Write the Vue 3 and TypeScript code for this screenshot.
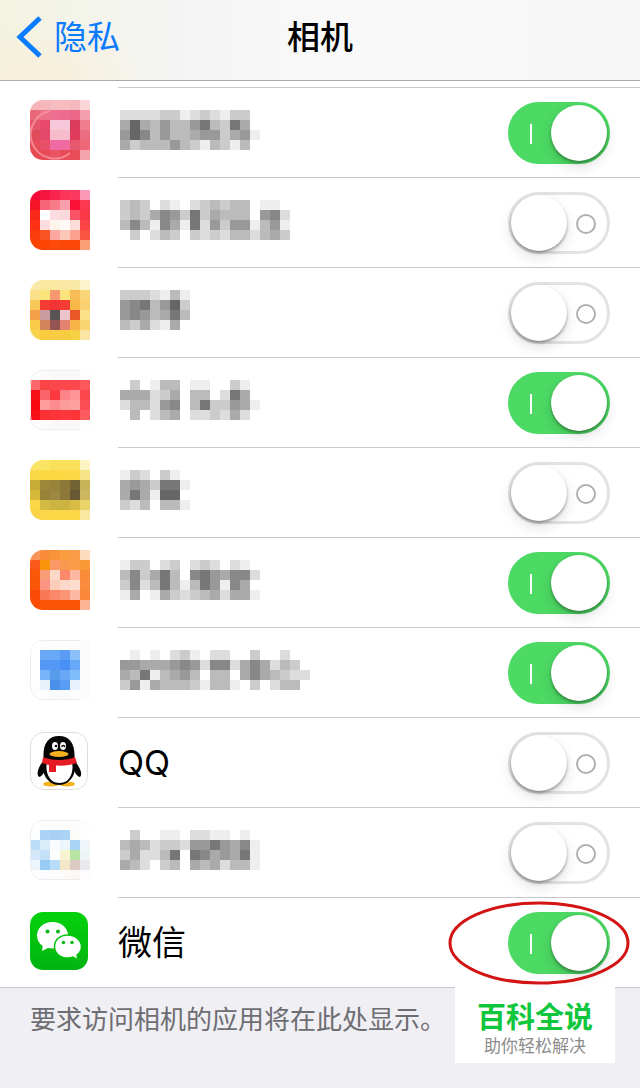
<script setup lang="ts">
import { ref } from 'vue'

type Icon = 'qq' | 'wechat' | string[]

interface AppRow {
  id: string
  icon: Icon
  name?: string
  mask?: string[]
  enabled: boolean
  ring?: boolean
  outlined?: boolean
  circled?: boolean
}

const rows = ref<AppRow[]>([
  {
    id: 'a1',
    enabled: true,
    ring: true,
    icon: [
      'f5b5b8 f5b8ba f6bcc0 f6bcc0 f5b9bc fad6d8',
      'e86878 ec7088 ee6f92 ee6b90 ec6888 f59fac',
      'e6566a e8486a f8c8da f8c8da dc3c5c f07c8c',
      'e04c5c e4486a f6bccc f6bccc e23c5c ec6c80',
      'e64c5a e8506a f06aa4 f06aa0 e6586c ee6878',
      'e84a52 e84a58 ea5464 e84a58 e84c58 f6a4ac',
    ],
    mask: ['ddddccedcdeccf', 'a6ab9bb97bc7af', '968b9bba99ca9e', 'acbbb9bcebcebf'],
  },
  {
    id: 'a2',
    enabled: false,
    icon: [
      'f40a38 f61440 fa2450 fb3458 fb3860 fc98b8',
      'f41428 f86478 f87c88 faa0ac fc1038 fb3850',
      'fa2818 ffffff fbdce0 fbd8dc fb5468 fb3848',
      'fb3014 fcdcdc fff4ec fffaf6 fddcd8 fb4448',
      'fb3c0c fb5424 fca8a0 fcc8b8 fca090 fb5440',
      'fb4404 fb4404 fb4a0c fb4808 fb4808 fca078',
    ],
    mask: ['cbcfdefdcbcbbfee', 'cbca89c7cabbbf98d', 'b8be8ae7d9c99eb9e', 'fcfdbcfcdcdbbdbac'],
  },
  {
    id: 'a3',
    enabled: false,
    icon: [
      'faeaa8 fae8a0 fae8a0 fae8a4 fae8a8 fcf2cc',
      'fae088 fce47c f89870 fce47c f8bc54 fad478',
      'f8c858 f43c34 f23434 f43c34 f8b848 fad070',
      'f4a048 c89ca0 585454 ecc4cc e85828 fae088',
      'f8cc48 d4845c 945454 e48470 f8b448 fad470',
      'f8d44c f8cc3c f8cc44 f8cc40 f8d044 fae4a4',
    ],
    mask: ['cccdebe', '987b96c', '989ba7b', 'bcadeaf'],
  },
  {
    id: 'a4',
    enabled: true,
    outlined: true,
    icon: [
      'fdfcfc fcfafb fbf8fa fbf8fa fbf8fa fefcfd',
      'fb686c fb4448 fc484c fc484c fc484c fc585c',
      'f81018 fb6468 fc3840 fc8488 fc9498 fc484c',
      'fa0810 fc9c9c fc8c90 fc9c9c fca0a0 fc4c54',
      'f81018 fb3034 fc3438 fc383c fc3438 fc5c60',
      'fdfcfc fcfafb fbf8fa fbf8fa fbf8fa fefdfe',
    ],
    mask: ['fcfebbfeeffcef', 'aaadcafbbfd7af', 'dbbd98fb7cc9ae', 'fbfdbafddcdadf'],
  },
  {
    id: 'a5',
    enabled: false,
    icon: [
      'fae468 fae464 fae058 fae058 fae058 fcf4c4',
      'fad848 fcd844 fcd844 fcd844 fcd848 f8e488',
      'c8ac38 9c8838 988438 8c7838 746434 c8b458',
      'd8b838 988438 9c8840 8c7838 685834 ccb860',
      'fcd848 d4bc44 ccb440 ccb440 d8bc44 e8d468',
      'fad444 fcd848 fcd848 fcd848 fcd848 fae8a0',
    ],
    mask: ['ecdfcef', 'a9ac77e', 'a7ae66f', 'cdbfbbe'],
  },
  {
    id: 'a6',
    enabled: true,
    icon: [
      'f89458 f88c38 fa9438 fa9c40 fa9c48 fcdcbc',
      'fa5818 fa9408 fb9868 fa9850 fa9c48 fa9838',
      'fa5808 fb9c78 fcd8c8 fb8868 fcb8a0 fa8c38',
      'fa5808 fb9480 fcccb8 fcd8cc fcdccc fa8c40',
      'fa4c08 fa7854 fb8868 fb9474 fcb8a0 fa8838',
      'fa4c04 fb5404 fb5404 fb5404 fb5404 fcb494',
    ],
    mask: ['eccfdcfdcdfdef', 'b8ca7bf879a88d', 'c8db7beb79e8af', 'eafeacdcbadaae'],
  },
  {
    id: 'a7',
    enabled: true,
    outlined: true,
    icon: [
      'ffffff fdfdfd fdfdfd fdfdfd fdfdfd fcfcfc',
      'ffffff 68a8f4 68a8f8 589cf6 8cc0f8 fcfcfc',
      'ffffff 5498f4 5498f6 4890f6 68a8f8 fcfcfc',
      'ffffff 78b4fa 589cec 68a8f4 80bcfa fcfcfc',
      'fdfdfd e8f0fa 4890ec 589cf6 e8f0fc fcfcfc',
      'fdfdfd fdfdfd f8fafc f8fafc fdfdfd fcfcfc',
    ],
    mask: ['fefefdcefddffcffdff', '99aaa989d88da8adbcf', 'ab7eba9bfbbfa8abcdd', 'c9eabbbcebbefcfdbbf'],
  },
  { id: 'qq', name: 'QQ', icon: 'qq', enabled: false },
  {
    id: 'a9',
    enabled: false,
    outlined: true,
    icon: [
      'fefefe fdfdfd fcfcfc fcfcfc fdfdfd fdfdfd',
      'fcfdfe acd4f6 a8d0f4 acd4f6 fcfcf8 fefefe',
      'bcdcf8 d8ecfa f8fcfe ecf6fc a8d4f6 f0f6fa',
      'd4e8fa c4e0f8 fcfefe f8f4d0 b8e4a4 ecf4f4',
      'ecf4fc 98ccf4 b8dcf8 f4e8c8 dccac4 eaeaee',
      'fdfdfe fcfdfe fcfcfc fdfbfa fdf8f6 fefcfc',
    ],
    mask: ['fcffeefddeefef', 'babdccd9979a8e', 'caddb7f78a9a7e', 'abdfcbfabadbbe'],
  },
  { id: 'wechat', name: '微信', icon: 'wechat', enabled: true, circled: true },
])

const cells = (icon: Icon): { x: number; y: number; fill: string }[] =>
  Array.isArray(icon)
    ? icon.flatMap((line, y) => line.split(' ').map((c, x) => ({ x: x * 10, y: y * 10, fill: '#' + c })))
    : []

const greys = (mask: string[]): { x: number; y: number; fill: string }[] =>
  mask.flatMap((line, y) => [...line].map((c, x) => ({ x: x * 10, y: y * 10, fill: '#' + c + c + c })))
</script>

<template>
  <div class="page" lang="zh-CN">
    <header class="bar">
      <a class="back" href="#">
        <svg width="26" height="42" viewBox="0 0 26 42" aria-hidden="true">
          <path d="M24 2 4 21 24 40" fill="none" stroke="#0a7aff" stroke-width="5" />
        </svg>
        <span>隐私</span>
      </a>
      <h1>相机</h1>
    </header>

    <main>
      <ul class="list">
        <li v-for="row in rows" :key="row.id">
          <label class="row">
            <span class="icon">
              <svg v-if="row.icon === 'qq'" width="60" height="60" viewBox="0 0 60 60" aria-hidden="true">
                <rect x=".5" y="2.5" width="57" height="57" rx="13" fill="#fff" stroke="#dedede" />
                <ellipse cx="21" cy="54" rx="8" ry="2.5" fill="#f2b01e" />
                <ellipse cx="37" cy="54" rx="8" ry="2.5" fill="#f2b01e" />
                <path d="M14 30C8 37 6 44 9 47c2 0 4-3 6-6zM44 30c6 7 9 14 6 17-2 0-4-3-6-6z" fill="#050505" />
                <path d="M29 6C18 6 13 14 13.500 27c-1 7-1 15 2 20 3 5 8 8 13.500 8s10.500-3 13.500-8c3-5 3-13 2-20C45 14 40 6 29 6z" fill="#050505" />
                <path d="M17 32h25c2 10-2 21-12.500 21S15 42 17 32z" fill="#fff" />
                <path d="M13 27c9 4 23 4 32 0l2 6c-6 2-13 3-21 2.500V42h-7v-7l-7-2z" fill="#e51c23" />
                <ellipse cx="25" cy="16" rx="3" ry="4" fill="#fff" />
                <ellipse cx="33" cy="16" rx="3" ry="4" fill="#fff" />
                <circle cx="26" cy="16" r="1.300" fill="#050505" />
                <path d="M31.500 17c1-2 2.500-2 3.500 0" fill="none" stroke="#050505" stroke-width="1.300" />
                <ellipse cx="29" cy="24" rx="9.500" ry="3" fill="#f9b01e" />
              </svg>
              <svg v-else-if="row.icon === 'wechat'" width="60" height="60" viewBox="0 0 60 60" aria-hidden="true">
                <defs>
                  <linearGradient id="wechat-green" x1="0" y1="0" x2="0" y2="1">
                    <stop offset="0" stop-color="#04d20c" />
                    <stop offset="1" stop-color="#02b312" />
                  </linearGradient>
                </defs>
                <rect y="2" width="58" height="58" rx="13" fill="url(#wechat-green)" />
                <path d="M22.500 12C13.500 12 7 18 7 25.500c0 4.500 2.200 8 5.700 10.500L12 41l6-3c9 2 20-2 20-12.500C38 18 31.500 12 22.500 12z" fill="#fff" />
                <circle cx="17.500" cy="21.500" r="2" fill="#07b714" />
                <circle cx="28" cy="21.500" r="2" fill="#07b714" />
                <path d="M37.500 25C30 25 24.500 30 24.500 36.500S30 48 37.500 48c2 0 4-.4 5.500-1l5 3-1-5c3-2 4.500-5 4.500-8.500C51.500 30 45 25 37.500 25z" fill="#fff" stroke="#06c310" stroke-width="1.500" />
                <circle cx="33.500" cy="32.500" r="1.700" fill="#07b714" />
                <circle cx="42" cy="32.500" r="1.700" fill="#07b714" />
              </svg>
              <svg v-else class="tile" width="60" height="60" viewBox="0 0 60 60" shape-rendering="crispEdges" aria-hidden="true">
                <rect v-for="c in cells(row.icon)" :key="`${c.x}-${c.y}`" :x="c.x" :y="c.y" width="10" height="10" :fill="c.fill" />
                <path v-if="row.ring" d="M20 11A24 24 0 1 0 40 53" fill="none" stroke="#f8a0a8" stroke-width="2" opacity=".7" shape-rendering="auto" />
                <path v-if="row.outlined" d="M50 .5H14Q.5 .5 .5 14V46Q.5 59.500 14 59.500H50" fill="none" stroke="#ededf0" shape-rendering="auto" />
              </svg>
            </span>

            <span class="cell">
              <span v-if="row.name" class="name">{{ row.name }}</span>
              <svg v-else-if="row.mask" class="mask" :width="row.mask[1].length * 10" height="40" shape-rendering="crispEdges" aria-hidden="true">
                <rect v-for="c in greys(row.mask)" :key="`${c.x}-${c.y}`" :x="c.x" :y="c.y" width="10" height="10" :fill="c.fill" />
              </svg>
              <span class="control">
                <input v-model="row.enabled" class="switch" type="checkbox" role="switch" />
                <svg v-if="row.circled" class="circle" width="182" height="84" viewBox="0 0 182 84" aria-hidden="true">
                  <ellipse cx="91" cy="42" rx="89" ry="40" fill="none" stroke="#d31414" stroke-width="3" />
                </svg>
              </span>
            </span>
          </label>
        </li>
      </ul>

      <footer class="foot">
        <p class="note">要求访问相机的应用将在此处显示。</p>
        <div class="stamp">
          <strong>百科全说</strong>
          <span>助你轻松解决</span>
        </div>
      </footer>
    </main>
  </div>
</template>

<style>
body {
  margin: 0;
  background: #efeff4;
}
</style>

<style scoped>
.page {
  min-height: 100vh;
  background: #efeff4;
  color: #000;
  font-family: Inter, "Noto Sans CJK SC", sans-serif;
}

.bar {
  display: grid;
  grid-template-columns: 1fr auto 1fr;
  align-items: center;
  height: 74px;
  padding: 0 16px 6px;
  border-bottom: 1px solid #acacac;
  background:
    radial-gradient(ellipse 110px 60px at 40px 80px, #f8efd9, transparent),
    linear-gradient(90deg, #f2f3e0, #f4f4ee 110px, #f4f4f4 180px, #f8f9f8 320px, #f6f7f6);
}

.back {
  display: flex;
  align-items: center;
  gap: 12px;
  color: #0a7aff;
  font-size: 33px;
  line-height: 40px;
  font-weight: 400;
  text-decoration: none;
}

h1 {
  margin: 0;
  font-size: 33px;
  line-height: 40px;
  font-weight: 500;
}

.list {
  margin: 0;
  padding: 6px 0 0;
  list-style: none;
  background: #fff;
}

.list::before {
  content: "";
  display: block;
  height: 1px;
  margin-left: 118px;
  background: #c8c7cc;
}

.row {
  display: flex;
  height: 90px;
}

.icon {
  flex: none;
  width: 118px;
  box-sizing: border-box;
  padding: 12px 0 0 30px;
}

.icon svg {
  display: block;
}

.tile {
  border-radius: 13px 0 0 13px;
}

.cell {
  flex: 1;
  display: flex;
  align-items: center;
  justify-content: space-between;
  padding-right: 30px;
  border-bottom: 1px solid #c8c7cc;
}

li:last-child {
  border-bottom: 1px solid #c8c7cc;
}

li:last-child .row {
  height: 89px;
}

li:last-child .cell {
  border-bottom: 0;
}

.name {
  font-size: 34px;
  line-height: 44px;
  font-weight: 400;
}

.mask {
  margin: 0 0 6px 2px;
}

.control {
  position: relative;
  display: flex;
}

.switch {
  appearance: none;
  position: relative;
  width: 102px;
  height: 62px;
  margin: 0;
  box-sizing: border-box;
  border: 3px solid #e3e3e3;
  border-radius: 31px;
  background: #fff;
}

.switch::before {
  content: "";
  position: absolute;
  top: 0;
  left: 0;
  width: 56px;
  height: 56px;
  border-radius: 50%;
  background: #fff;
  box-shadow: 0 2px 3px rgba(0, 0, 0, 0.35), 0 6px 14px rgba(0, 0, 0, 0.12);
}

.switch::after {
  content: "";
  position: absolute;
  top: 19px;
  right: 11px;
  width: 20px;
  height: 20px;
  box-sizing: border-box;
  border: 2px solid #b0b0b0;
  border-radius: 50%;
}

.switch:checked {
  border-color: #4cd964;
  background: #4cd964;
}

.switch:checked::before {
  left: 40px;
}

.switch:checked::after {
  left: 19px;
  width: 2px;
  border: 0;
  border-radius: 0;
  background: #fff;
}

.circle {
  position: absolute;
  top: -11px;
  right: -20px;
  pointer-events: none;
}

.foot {
  position: relative;
  padding: 12px 30px;
}

.note {
  margin: 0;
  color: #6d6d72;
  font-size: 26px;
  line-height: 40px;
  font-weight: 400;
}

.stamp {
  position: absolute;
  top: -1px;
  right: 25px;
  width: 160px;
  height: 76px;
  box-sizing: border-box;
  padding-top: 14px;
  display: flex;
  flex-direction: column;
  align-items: center;
  background: #fff;
}

.stamp strong {
  color: #0fc63c;
  font-size: 29px;
  line-height: 34px;
  font-weight: 700;
}

.stamp span {
  color: #8c8c8c;
  font-size: 17px;
  line-height: 22px;
}
</style>
